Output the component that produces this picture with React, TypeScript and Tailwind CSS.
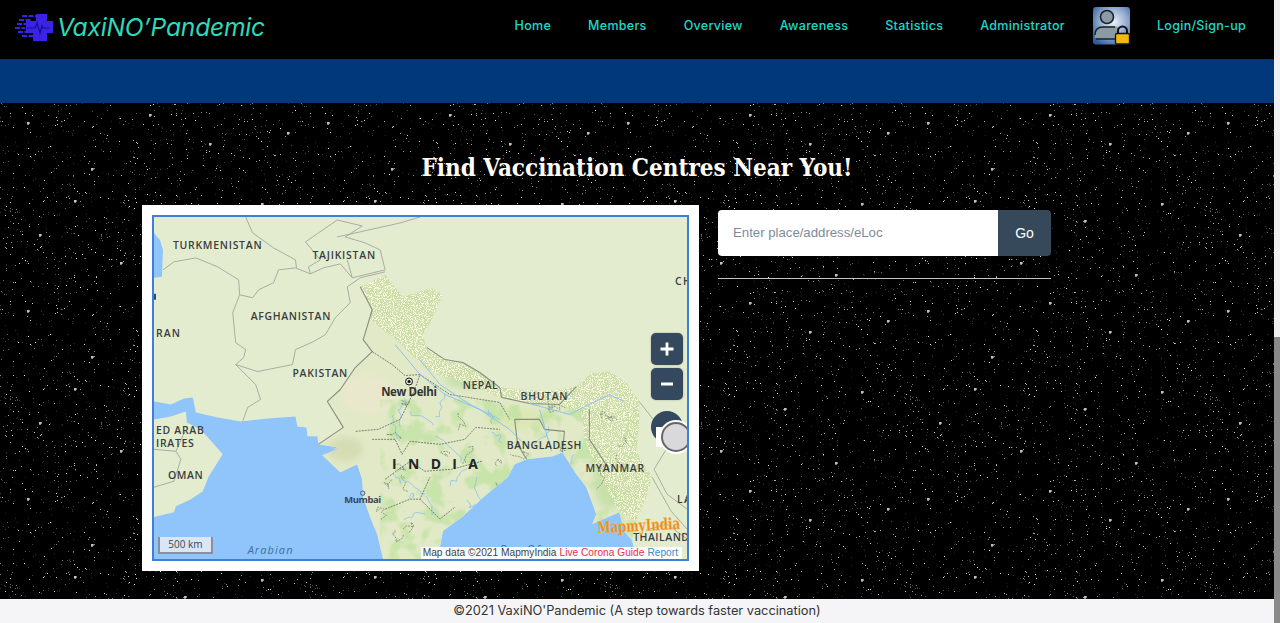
import React from "react";

function rng(seed: number) {
  let s = seed;
  return () => {
    s = (s * 1664525 + 1013904223) % 4294967296;
    return s / 4294967296;
  };
}

const r0 = rng(12345);
const stars = Array.from({ length: 1200 }, () => {
  const o = r0();
  return { x: Math.floor(r0() * 300), y: Math.floor(r0() * 188), o: 0.15 + o * o * 0.8 };
});
const bright = [
  [28, 20], [92, 66], [150, 12], [210, 41], [262, 101], [40, 132], [121, 160], [185, 118], [236, 172], [75, 98], [288, 30],
];

const r1 = rng(777);
const rivers = Array.from({ length: 34 }, () => {
  let x = 385 + r1() * 240;
  let y = 350 + r1() * 190;
  let d = `M${x.toFixed(1)} ${y.toFixed(1)}`;
  const dx = (r1() - 0.4) * 4;
  const dy = (r1() - 0.3) * 3;
  for (let i = 0; i < 7; i++) {
    x += dx * 2 + (r1() - 0.5) * 7;
    y += dy * 2 + (r1() - 0.5) * 7;
    d += `L${x.toFixed(1)} ${y.toFixed(1)}`;
  }
  return d;
});
const borders = Array.from({ length: 26 }, () => {
  let x = 380 + r1() * 250;
  let y = 385 + r1() * 160;
  let d = `M${x.toFixed(1)} ${y.toFixed(1)}`;
  for (let i = 0; i < 6; i++) {
    x += (r1() - 0.5) * 14;
    y += (r1() - 0.4) * 11;
    d += `L${x.toFixed(1)} ${y.toFixed(1)}`;
  }
  return d;
});

function StarField() {
  return (
    <svg className="absolute inset-0 w-full h-full" aria-hidden="true">
      <defs>
        <pattern id="stars" width="300" height="188" patternUnits="userSpaceOnUse">
          {stars.map((d, i) => (
            <rect key={i} x={d.x} y={d.y} width="1" height="1" fill="#fff" opacity={d.o} />
          ))}
          {bright.map(([x, y], i) => (
            <path key={i} d={`M${x - 1} ${y}h3M${x} ${y - 1}v3`} stroke="#fff" strokeWidth="1" fill="none" />
          ))}
        </pattern>
      </defs>
      <rect width="100%" height="100%" fill="url(#stars)" />
    </svg>
  );
}

function LogoIcon() {
  return (
    <svg width="40" height="30" viewBox="14 11 40 30" className="shrink-0">
      <path d="M36 13h11v7h6v12h-6v8H33v-8h-7V20h10z" fill="#3a22e6" />
      <path d="M22 15h14M19 19h12M15 27h10M17 23h9M18 31h12M22 35h11" stroke="#3a22e6" strokeWidth="2" strokeDasharray="5 1.5" />
      <path d="M27 27h8l2-5 3 10 2-7 1 2h6" stroke="#14108a" strokeWidth="1.2" fill="none" />
    </svg>
  );
}

function UserIcon() {
  return (
    <svg width="38" height="38" viewBox="0 0 38 38">
      <defs>
        <radialGradient id="ug" cx="0.55" cy="0.4" r="0.7">
          <stop offset="0" stopColor="#eef2f7" />
          <stop offset="0.55" stopColor="#8ea9cd" />
          <stop offset="1" stopColor="#2f5c9c" />
        </radialGradient>
      </defs>
      <rect width="37" height="37.5" rx="3" fill="url(#ug)" />
      <circle cx="14" cy="10" r="6.5" fill="#8c9ba3" stroke="#1a2430" strokeWidth="1.6" />
      <path d="M2 31v-5c0-5 4-7 8-7h10c3 0 5 1 6 3v9z" fill="#8c9ba3" />
      <path d="M2 28c0-6 3-8 8-8h12M3 32h19" stroke="#1a2430" strokeWidth="1.6" fill="none" />
      <path d="M25 27v-3a4.500 4.500 0 0 1 9 0v3" stroke="#111" strokeWidth="2" fill="none" />
      <rect x="22.500" y="26.500" width="14" height="10.500" rx="1.500" fill="#f4b70f" stroke="#111" strokeWidth="1.300" />
    </svg>
  );
}

const labels: [string, number, number, number][] = [
  ["TURKMENISTAN", 172, 249, 89],
  ["TAJIKISTAN", 312, 259, 63],
  ["AFGHANISTAN", 250, 320, 80],
  ["RAN", 155, 337, 24],
  ["PAKISTAN", 292, 377, 55],
  ["NEPAL", 463, 390, 35],
  ["BHUTAN", 521, 401, 47],
  ["BANGLADESH", 507, 450, 75],
  ["MYANMAR", 586, 473, 59],
  ["ED ARAB", 155, 435, 48],
  ["IRATES", 155, 448, 38],
  ["OMAN", 167, 480, 35],
  ["THAILAND", 634, 542, 56],
  ["CH", 676, 285, 16],
  ["LA", 678, 504, 14],
  ["UZBEKISTAN", 342, 217, 75],
];

const terrain =
  "M385 275L403 297L432 288L443 295L433 317L423 337L427 348L445 360L463 363L480 373L500 388L547 392L577 387L593 373L610 372L627 383L640 402L640 425L637 452L653 478L647 498L637 522L633 542L625 532L620 513L593 525L597 515L587 488L577 475L563 453L553 457L527 460L515 465L508 478L487 495L463 517L443 532L440 548L440 560L383 560L377 535L370 518L363 498L362 480L357 465L340 473L322 456L337 448L318 445L343 428L327 402L340 390L355 368L372 352L363 340L372 310L360 287Z";
const hills =
  "M385 275L403 297L432 288L443 295L433 317L423 337L427 348L445 360L463 363L480 373L500 388L547 392L577 387L593 373L610 372L627 383L640 402L640 425L637 452L653 478L647 498L637 522L620 513L603 480L585 440L582 412L560 405L530 404L500 398L470 385L440 376L427 370L393 337L370 320L370 307L360 287Z";

function MapDrawing() {
  return (
    <svg viewBox="153 217 535 343" className="block w-full h-full" preserveAspectRatio="none">
      <defs>
        <filter id="speck" x="0" y="0" width="100%" height="100%">
          <feTurbulence type="fractalNoise" baseFrequency="0.9" numOctaves="2" seed="4" result="n" />
          <feColorMatrix in="n" values="0 0 0 0 0 0 0 0 0 0 0 0 0 0 0 0 0 0 9 -4.400" result="m" />
          <feComposite in="SourceGraphic" in2="m" operator="in" />
        </filter>
        <filter id="patch" x="0" y="0" width="100%" height="100%">
          <feTurbulence type="fractalNoise" baseFrequency="0.045" numOctaves="3" seed="9" result="n" />
          <feColorMatrix in="n" values="0 0 0 0 0 0 0 0 0 0 0 0 0 0 0 0 0 0 7 -3.500" result="m" />
          <feComposite in="SourceGraphic" in2="m" operator="in" />
        </filter>
        <filter id="soft" x="-20%" y="-20%" width="140%" height="140%">
          <feGaussianBlur stdDeviation="3.500" />
        </filter>
        <filter id="softer" x="-5%" y="-5%" width="110%" height="110%">
          <feGaussianBlur stdDeviation="0.400" />
        </filter>
        <clipPath id="landclip">
          <path d={terrain} />
        </clipPath>
      </defs>
      <g filter="url(#softer)">
        <rect x="153" y="217" width="535" height="343" fill="#e4ecd0" />
        <path d="M153 233L159 240L162 250L161 277L153 278Z" fill="#8fc5fb" />
        <rect x="153" y="294" width="2" height="6" fill="#1d4f8c" />
        <path
          d="M153 402L170 405L183 399L192 398L195 413L217 418L240 422L267 419L295 417L297 427L306 428L307 437L317 437L318 445L337 448L322 456L340 473L357 465L362 480L363 498L370 518L377 535L383 560L153 560Z"
          fill="#8fc5fb"
        />
        <path d="M153 420L170 417L185 412L186 423L200 430L222 455L208 477L202 492L190 500L175 507L173 513L153 518Z" fill="#e4ecd0" />
        <path
          d="M440 560L440 548L443 532L463 517L487 495L508 478L515 465L527 460L553 457L563 453L577 475L587 488L597 515L593 525L620 513L625 532L633 542L637 560Z"
          fill="#8fc5fb"
        />
        <path d={terrain} fill="#e1e9c6" />
        <g clipPath="url(#landclip)">
          <g filter="url(#soft)">
            <ellipse cx="368" cy="395" rx="28" ry="20" fill="#e9e8cc" />
            <ellipse cx="345" cy="450" rx="18" ry="12" fill="#d6dbb4" />
            <ellipse cx="520" cy="420" rx="34" ry="10" fill="#dbe7b2" />
            <ellipse cx="610" cy="480" rx="16" ry="30" fill="#c8e0aa" />
            <ellipse cx="470" cy="380" rx="24" ry="8" fill="#c0dfa6" />
          </g>
          <rect x="380" y="400" width="270" height="160" fill="#bfe2a0" filter="url(#patch)" opacity="0.75" />
          <g fill="none" stroke="#8cc2f2" strokeWidth="0.800">
            {rivers.map((d, i) => (
              <path key={i} d={d} />
            ))}
          </g>
        </g>
        <path d={hills} fill="#c6d9a0" opacity="0.8" />
        <path d={hills} fill="#fbf9e0" filter="url(#speck)" />
        <g clipPath="url(#landclip)">
          <g fill="none" stroke="#6f756c" strokeWidth="0.800" strokeDasharray="2 1" opacity="0.85">
            {borders.map((d, i) => (
              <path key={i} d={d} />
            ))}
          </g>
        </g>
        <g fill="none" stroke="#a1a69a" strokeWidth="0.900" strokeLinejoin="round">
          <path d="M162 270L173 262L195 258L217 267L238 280L239 295L252 298L258 290L273 283L278 270L295 268L310 274L323 268L340 264L352 278" />
          <path d="M245 217L252 233L273 248L295 260L296 268" />
          <path d="M239 295L232 313L235 343L245 350L243 358L235 365L257 372L292 365L295 350L313 342L325 335L335 318L350 303L347 287L360 278L385 272" />
          <path d="M235 365L255 385L260 400L247 408L242 422" />
          <path d="M310 274L308 267L320 260L305 242L318 233L337 220L362 226L345 237L365 243L380 250L385 270L352 278L347 260" />
          <path d="M337 237L400 223L420 217" />
          <path d="M153 450L175 452L180 460L173 482L153 488" />
          <path d="M175 452L184 432" />
          <path d="M640 402L662 430L669 447L655 470L668 495L688 510" />
          <path d="M653 478L672 512L688 530" />
          <path d="M650 530L668 525L688 540" />
        </g>
        <g fill="none" stroke="#878d82" strokeWidth="1.100" strokeLinejoin="round">
          <path d="M360 287L372 310L363 340L372 352L355 368L340 390L327 402L343 428L318 445" />
          <path d="M427 348L445 360L463 363L480 373L500 388" />
          <path d="M500 388L502 398L530 404L560 405L577 387" />
          <path d="M515 420L540 420L545 430L565 432L563 453M515 420L518 445L527 460" />
          <path d="M590 410L590 440L610 470" />
        </g>
        <g fill="none" stroke="#6f756c" strokeWidth="0.900" strokeDasharray="2 1" strokeLinejoin="round">
          <path d="M372 352L392 365L405 376L420 375L414 392L400 420L378 430L355 432" />
          <path d="M372 440L395 440L402 455L410 442L440 445L465 440L476 428L500 430" />
          <path d="M385 480L410 462L425 472L452 470L482 462" />
          <path d="M385 510L410 500L420 500L430 478M420 500L440 520L455 508" />
          <path d="M420 375L450 395L500 403L510 420" />
        </g>
        <g fill="none" stroke="#86bdf2" strokeWidth="0.900">
          <path d="M395 345L420 375L445 395L480 410L510 430L530 450" />
          <path d="M420 360L440 385L470 405L500 420" />
          <path d="M530 404L570 415L610 395L625 402" />
          <path d="M540 410L552 452" />
        </g>
        <path d="M322 456l6-5 10-2-9 4z" fill="#8fc5fb" />
      </g>

      <g fontFamily="'Open Sans', 'Noto Sans', sans-serif" fontWeight="600" fontSize="10.500" fill="#3a3d3d">
        {labels.map(([t, x, y, w]) => (
          <text key={t} x={x} y={y} textLength={w} lengthAdjust="spacing">
            {t}
          </text>
        ))}
        <text x="392" y="470" textLength="86" lengthAdjust="spacing" fontSize="14" fontWeight="700" fill="#222525">
          I N D I A
        </text>
        <circle cx="409" cy="382" r="3.500" fill="#e8e8e0" stroke="#111" strokeWidth="1" />
        <circle cx="409" cy="382" r="1.600" fill="#111" />
        <text x="381" y="397" textLength="56" lengthAdjust="spacing" fontSize="11.500" fontWeight="700" fill="#303535">
          New Delhi
        </text>
        <circle cx="362.500" cy="494" r="2.200" fill="#a9cdf3" stroke="#3a4a66" strokeWidth="0.800" />
        <text x="344" y="504" textLength="37" lengthAdjust="spacing" fontSize="9.500" fontWeight="700" fill="#3a4658">
          Mumbai
        </text>
        <text x="247" y="555" textLength="45" lengthAdjust="spacing" fontSize="11" fontStyle="italic" fontWeight="400" fill="#3a6f9f">
          Arabian
        </text>
        <text x="500" y="554" textLength="40" lengthAdjust="spacing" fontSize="11" fontStyle="italic" fontWeight="400" fill="#3a6f9f">
          Bay Of
        </text>
      </g>
      <g transform="rotate(-3 640 526)">
        <text
          x="598"
          y="532"
          textLength="83"
          lengthAdjust="spacingAndGlyphs"
          fontFamily="'DejaVu Serif', serif"
          fontSize="16"
          fontWeight="700"
          fill="#ee8a1c"
          stroke="#f7c04a"
          strokeWidth="0.400"
        >
          MapmyIndia
        </text>
      </g>
    </svg>
  );
}

function MapPanel() {
  return (
    <div className="w-[557px] h-[366px] bg-white p-[10px] shrink-0">
      <div className="relative w-[537px] h-[346px] border-2 border-[#3f7fd6] overflow-hidden">
        <MapDrawing />
        <div className="absolute left-[4px] bottom-[5px] w-[55px] h-[17px] bg-[#d8e6f8] border-2 border-t-0 border-[#8b8f96] flex items-center justify-center text-[10px] text-[#444] font-['Open_Sans']">
          500 km
        </div>
        <div className="absolute right-[5px] bottom-0 h-[12px] pl-[2px] pr-[4px] bg-white/95 flex items-center gap-[3px] text-[10.2px] leading-none font-['Liberation_Sans'] whitespace-nowrap">
          <span className="text-[#444]">Map data ©2021 MapmyIndia</span>
          <span className="text-[#f0303c]">Live Corona Guide</span>
          <span className="text-[#3a8cc4]">Report</span>
        </div>
        <div className="absolute right-[4px] top-[116px] w-[32px] h-[32px] rounded-[5px] bg-[#34495e] flex items-center justify-center shadow-[0_0_2px_rgba(0,0,0,0.3)]">
          <svg width="16" height="16" viewBox="0 0 16 16"><path d="M8 1.500v13M1.500 8h13" stroke="#fff" strokeWidth="2.800" /></svg>
        </div>
        <div className="absolute right-[4px] top-[151px] w-[32px] h-[32px] rounded-[5px] bg-[#34495e] flex items-center justify-center shadow-[0_0_2px_rgba(0,0,0,0.3)]">
          <svg width="14" height="14" viewBox="0 0 14 14"><path d="M1 7h12" stroke="#fff" strokeWidth="3" /></svg>
        </div>
        <div className="absolute left-[497px] top-[194px] w-[32px] h-[32px] rounded-full bg-[#34495e]" />
        <div className="absolute left-[502px] top-[210px] w-[8px] h-[20px] bg-white" />
        <div className="absolute left-[505px] top-[203px] w-[34px] h-[34px] rounded-full bg-white flex items-center justify-center">
          <div className="w-[30px] h-[30px] rounded-full bg-[#d9d9dc] border-2 border-[#666]" />
        </div>
      </div>
    </div>
  );
}

const navClass = "font-['Inter'] font-medium text-[12.5px] tracking-[0.3px] text-[#1cdac8] whitespace-nowrap";

export default function App() {
  const nav = ["Home", "Members", "Overview", "Awareness", "Statistics"];
  return (
    <div className="flex h-[623px] w-[1280px] overflow-hidden bg-black">
      <div className="flex flex-col w-[1274px] h-full">
        <header className="h-[59px] bg-black flex items-center shrink-0">
          <div className="flex items-center ml-[14px] gap-[3px] mb-[5px]">
            <LogoIcon />
            <span className="font-['Inter'] italic font-normal text-[24.6px] leading-none text-[#2fd9bb] tracking-[-0.2px]">VaxiNO’Pandemic</span>
          </div>
          <nav className="ml-auto mr-[28px] flex items-center mb-[7px]">
            {nav.map((n) => (
              <a key={n} className={`mr-[37px] ${navClass}`}>
                {n}
              </a>
            ))}
            <a className={`mr-[28px] ${navClass}`}>Administrator</a>
            <UserIcon />
            <a className={`ml-[26px] ${navClass}`}>Login/Sign-up</a>
          </nav>
        </header>
        <div className="h-[44px] bg-[#00387b] shrink-0" />
        <main className="relative flex-1 bg-black">
          <StarField />
          <div className="relative">
            <h1 className="pt-[48px] h-[102px] text-center font-['DejaVu_Serif_Condensed','DejaVu_Serif',serif] font-bold text-[24px] leading-[34px] text-[#fffdf5]">
              Find Vaccination Centres Near You!
            </h1>
            <div className="flex pl-[142px]">
              <MapPanel />
              <div className="ml-[19px] w-[333px] pt-[5px]">
                <div className="flex h-[46px]">
                  <input
                    readOnly
                    placeholder="Enter place/address/eLoc"
                    className="flex-1 min-w-0 bg-white rounded-l-[4px] pl-[15px] font-['Liberation_Sans'] text-[13.2px] outline-none placeholder:text-[#7d8b99]"
                  />
                  <button className="w-[53px] bg-[#35495a] rounded-r-[4px] text-white text-[14px] font-['Liberation_Sans']">Go</button>
                </div>
                <div className="mt-[22px] h-px bg-[#c4c4c4]" />
              </div>
            </div>
          </div>
        </main>
        <footer className="h-[24px] bg-[#f5f5f7] shrink-0 flex items-center justify-center font-['Inter'] text-[12.8px] text-[#333]">
          ©2021 VaxiNO'Pandemic (A step towards faster vaccination)
        </footer>
      </div>
      <div className="w-[6px] h-full bg-[#f1f1f1] flex flex-col">
        <div className="h-[337px] shrink-0" />
        <div className="flex-1 bg-[#8a8a8a]" />
      </div>
    </div>
  );
}
